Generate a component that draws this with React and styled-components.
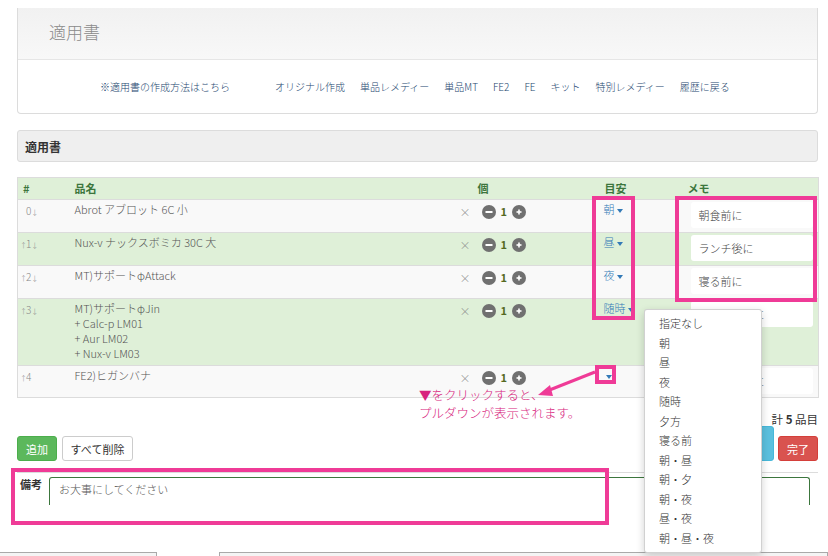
import React from 'react';
import styled, { createGlobalStyle } from 'styled-components';

const GlobalStyle = createGlobalStyle`
  body {
    margin: 0;
    background: #fff;
    font-family: "Noto Sans CJK JP", "Noto Sans", sans-serif;
  }
`;

const PINK = '#ef3b97';

const Page = styled.div`
  position: relative;
  width: 828px;
  height: 556px;
  overflow: hidden;
  padding-top: 8px;
  box-sizing: border-box;
`;

const Content = styled.div`
  margin-left: 17px;
  width: 801px;
`;

const TopPanel = styled.div`
  border: 1px solid #dcdcdc;
  border-top: none;
  border-radius: 0 0 4px 4px;
`;

const PanelHead = styled.div`
  height: 52px;
  display: flex;
  align-items: center;
  padding: 0 0 4px 31px;
  box-sizing: border-box;
  background: linear-gradient(#f1f1f1, #f8f8f8);
  border-bottom: 1px solid #e6e6e6;
`;

const Title = styled.h1`
  margin: 0;
  font-size: 17px;
  font-weight: 300;
  color: #8a8a8a;
`;

const LinkBar = styled.nav`
  height: 53px;
  display: flex;
  align-items: center;
  gap: 15px;
  padding-left: 82px;
  font-size: 10px;
  font-weight: 300;
  color: #23466e;
`;

const NavLink = styled.span`
  margin-right: ${(p) => (p.$wide ? '30px' : '0')};
  white-space: nowrap;
`;

const SectionHead = styled.div`
  margin-top: 16px;
  height: 32px;
  box-sizing: border-box;
  display: flex;
  align-items: center;
  padding-left: 7px;
  background: #efefef;
  border: 1px solid #dcdcdc;
  border-radius: 3px;
  font-size: 12px;
  font-weight: bold;
  color: #333;
`;

const Table = styled.table`
  margin-top: 15px;
  width: 801px;
  border-collapse: collapse;
  table-layout: fixed;
  border: 1px solid #dcdcdc;
  font-size: 11px;
`;

const HeadRow = styled.tr`
  background: #dff0d8;
`;

const Th = styled.th`
  text-align: left;
  padding: 3px 5px 3px ${(p) => p.$indent || 5}px;
  line-height: 15px;
  color: #3c763d;
  font-weight: bold;
`;

const Row = styled.tr`
  background: ${(p) => (p.$green ? '#dff0d8' : '#f9f9f9')};
  border-top: 1px solid #dcdcdc;
`;

const Td = styled.td`
  vertical-align: top;
  padding: 2px 5px ${(p) => (p.$last ? 3 : 4)}px;
  line-height: 15px;
  font-weight: 300;
  color: #555;
`;

const Order = styled.td`
  vertical-align: top;
  padding: 3px 2px 3px;
  font-size: 10px;
  font-weight: 300;
  color: #888;
  white-space: nowrap;
`;

const Arrow = styled.span`
  display: inline-block;
  width: 6px;
  text-align: center;
  font-size: 7px;
  visibility: ${(p) => (p.$hidden ? 'hidden' : 'visible')};
`;

const Controls = styled.div`
  display: flex;
  align-items: center;
  margin-top: 2px;
`;

const Times = styled.span`
  color: #8a8a8a;
  font-size: 11px;
  line-height: 11px;
  margin: 2px 11px 0 0;
`;

const Qty = styled.span`
  margin: 0 5px;
  font-weight: bold;
  color: #55691f;
`;

const Timing = styled.span`
  color: #337ab7;
  font-size: 11px;
`;

const Caret = styled.span`
  display: inline-block;
  width: 0;
  height: 0;
  margin-left: 2px;
  vertical-align: middle;
  border-top: 4px solid #337ab7;
  border-left: 3.5px solid transparent;
  border-right: 3.5px solid transparent;
`;

const MemoInput = styled.div`
  margin-left: 2px;
  height: 26px;
  box-sizing: border-box;
  padding-left: 8px;
  display: flex;
  align-items: center;
  background: #fff;
  border-radius: 3px;
  color: #444;
  white-space: nowrap;
  overflow: hidden;
`;

const ActionsRow = styled.div`
  display: flex;
  justify-content: space-between;
  align-items: flex-end;
  margin-top: 14px;
`;

const ButtonGroup = styled.div`
  display: flex;
  align-items: flex-end;
  gap: ${(p) => p.$gap || 5}px;
`;

const RightSide = styled.div`
  display: flex;
  flex-direction: column;
  align-items: flex-end;
`;

const Total = styled.div`
  font-size: 11.5px;
  line-height: 14px;
  color: #333;
  b {
    font-weight: bold;
  }
`;

const variants = {
  success: 'background:#5cb85c;border-color:#4cae4c;color:#fff;',
  default: 'background:#fff;border-color:#ccc;color:#333;',
  info: 'background:#5bc0de;border-color:#46b8da;color:#fff;',
  danger: 'background:#d9534f;border-color:#d43f3a;color:#fff;',
};

const Button = styled.button`
  height: ${(p) => p.$h || 25}px;
  width: ${(p) => p.$w}px;
  padding: 0;
  border: 1px solid;
  border-radius: 3px;
  font-family: inherit;
  font-size: 11px;
  ${(p) => variants[p.$variant]}
`;

const Remarks = styled.div`
  display: flex;
  margin-top: 11px;
  padding-top: 4px;
  border-top: 1px solid #dcdcdc;
`;

const RemarksLabel = styled.label`
  width: 29px;
  padding-left: 3px;
  line-height: 14px;
  font-size: 11px;
  font-weight: bold;
  color: #333;
`;

const RemarksBox = styled.div`
  width: 761px;
  height: 28px;
  box-sizing: border-box;
  padding: 3px 9px;
  line-height: 16px;
  border: 1px solid #3c763d;
  border-bottom: none;
  border-radius: 3px 3px 0 0;
  font-size: 11px;
  font-weight: 300;
  color: #555;
`;

const BottomRow = styled.div`
  display: flex;
  margin-top: 47px;
`;

const StubField = styled.div`
  height: 12px;
  width: ${(p) => (p.$w ? `${p.$w}px` : 'auto')};
  flex: ${(p) => (p.$w ? 'none' : '1')};
  margin-left: ${(p) => p.$ml || 0}px;
  border: 1px solid #a9a9a9;
  background: #f4f4f4;
`;

const Frame = styled.div`
  position: absolute;
  left: ${(p) => p.$x}px;
  top: ${(p) => p.$y}px;
  width: ${(p) => p.$w}px;
  height: ${(p) => p.$h}px;
  box-sizing: border-box;
  border: 4px solid ${PINK};
  pointer-events: none;
`;

const Note = styled.div`
  position: absolute;
  left: 419px;
  top: 386px;
  font-size: 12.5px;
  line-height: 18px;
  font-weight: 300;
  color: #d7237d;
`;

const NoteArrow = styled.svg`
  position: absolute;
  left: 530px;
  top: 365px;
`;

const Menu = styled.ul`
  position: absolute;
  left: 644px;
  top: 309px;
  width: 118px;
  margin: 0;
  padding: 4px 0;
  list-style: none;
  box-sizing: border-box;
  background: #fff;
  border: 1px solid rgba(0, 0, 0, 0.18);
  border-radius: 3px;
  box-shadow: 0 3px 8px rgba(0, 0, 0, 0.18);
`;

const MenuItem = styled.li`
  height: 19.5px;
  line-height: 19.5px;
  padding-left: 14px;
  font-size: 11px;
  font-weight: 300;
  color: #333;
`;

const RoundIcon = ({ plus }) => (
  <svg width="14" height="14" viewBox="0 0 14 14">
    <circle cx="7" cy="7" r="7" fill="#707070" />
    {plus ? (
      <>
        <rect x="4.5" y="6.2" width="5" height="1.6" fill="#fff" />
        <rect x="6.2" y="4.5" width="1.6" height="5" fill="#fff" />
      </>
    ) : (
      <rect x="3.5" y="6" width="7" height="2" fill="#fff" />
    )}
  </svg>
);

const links = ['オリジナル作成', '単品レメディー', '単品MT', 'FE2', 'FE', 'キット', '特別レメディー', '履歴に戻る'];

const items = [
  { no: 0, name: ['Abrot アブロット 6C 小'], timing: '朝', memo: '朝食前に' },
  { no: 1, name: ['Nux-v ナックスボミカ 30C 大'], timing: '昼', memo: 'ランチ後に' },
  { no: 2, name: ['MT)サポートφAttack'], timing: '夜', memo: '寝る前に' },
  { no: 3, name: ['MT)サポートφJin', '+ Calc-p LM01', '+ Aur LM02', '+ Nux-v LM03'], timing: '随時', memo: '起きてすぐに' },
  { no: 4, name: ['FE2)ヒガンバナ'], timing: '', memo: 'おやつの時に' },
];

const options = ['指定なし', '朝', '昼', '夜', '随時', '夕方', '寝る前', '朝・昼', '朝・夕', '朝・夜', '昼・夜', '朝・昼・夜'];

export default function App() {
  return (
    <Page>
      <GlobalStyle />
      <Content>
        <TopPanel>
          <PanelHead>
            <Title>適用書</Title>
          </PanelHead>
          <LinkBar>
            <NavLink $wide>※適用書の作成方法はこちら</NavLink>
            {links.map((l) => (
              <NavLink key={l}>{l}</NavLink>
            ))}
          </LinkBar>
        </TopPanel>

        <SectionHead>適用書</SectionHead>

        <Table>
          <colgroup>
            <col style={{ width: 52 }} />
            <col style={{ width: 385 }} />
            <col style={{ width: 144 }} />
            <col style={{ width: 85 }} />
            <col style={{ width: 135 }} />
          </colgroup>
          <thead>
            <HeadRow>
              <Th>#</Th>
              <Th>品名</Th>
              <Th $indent={23}>個</Th>
              <Th $indent={6}>目安</Th>
              <Th $indent={4}>メモ</Th>
            </HeadRow>
          </thead>
          <tbody>
            {items.map((it) => {
              const last = it.no === items.length - 1;
              return (
                <Row key={it.no} $green={it.no % 2 === 1}>
                  <Order>
                    <Arrow $hidden={it.no === 0}>↑</Arrow>
                    {it.no}
                    <Arrow $hidden={last}>↓</Arrow>
                  </Order>
                  <Td $last={last}>
                    {it.name.map((n) => (
                      <div key={n}>{n}</div>
                    ))}
                  </Td>
                  <Td $last={last}>
                    <Controls>
                      <Times>×</Times>
                      <RoundIcon />
                      <Qty>1</Qty>
                      <RoundIcon plus />
                    </Controls>
                  </Td>
                  <Td $last={last}>
                    <Timing>
                      {it.timing}
                      <Caret />
                    </Timing>
                  </Td>
                  <Td $last={last}>
                    <MemoInput>{it.memo}</MemoInput>
                  </Td>
                </Row>
              );
            })}
          </tbody>
        </Table>

        <ActionsRow>
          <ButtonGroup>
            <Button $variant="success" $w={40}>追加</Button>
            <Button $variant="default" $w={71}>すべて削除</Button>
          </ButtonGroup>
          <RightSide>
            <Total>
              計 <b>5</b> 品目
            </Total>
            <ButtonGroup $gap={4}>
              <Button $variant="info" $w={52} $h={35}>印刷</Button>
              <Button $variant="danger" $w={40}>完了</Button>
            </ButtonGroup>
          </RightSide>
        </ActionsRow>

        <Remarks>
          <RemarksLabel>備考</RemarksLabel>
          <RemarksBox>お大事にしてください</RemarksBox>
        </Remarks>
      </Content>

      <BottomRow>
        <StubField $w={156} $ml={-1} />
        <StubField $ml={62} />
      </BottomRow>

      <Frame $x={592} $y={196} $w={43} $h={124} />
      <Frame $x={675} $y={196} $w={142} $h={106} />
      <Frame $x={595} $y={365} $w={21} $h={19} />
      <Frame $x={11} $y={468} $w={598} $h={57} />

      <NoteArrow width="70" height="36" viewBox="0 0 70 36">
        <line x1="65" y1="7" x2="17" y2="26" stroke={PINK} strokeWidth="3" />
        <polygon points="8,30 20,20 23,31" fill={PINK} />
      </NoteArrow>
      <Note>
        <div>▼をクリックすると、</div>
        <div>プルダウンが表示されます。</div>
      </Note>

      <Menu>
        {options.map((o) => (
          <MenuItem key={o}>{o}</MenuItem>
        ))}
      </Menu>
    </Page>
  );
}
